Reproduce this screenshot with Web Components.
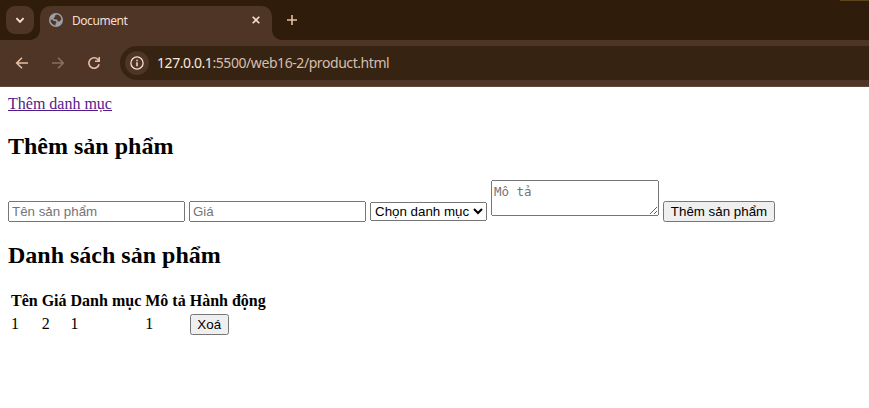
<!DOCTYPE html>
<html lang="vi">
<head>
<meta charset="utf-8">
<title>Document</title>
<style>
body{margin:0;background:#fff;font:16px "Liberation Serif",serif;color:#000;overflow:hidden}
</style>
</head>
<body>
<browser-frame>
  <tab-strip slot="tabs">Document</tab-strip>
  <nav-toolbar slot="toolbar"><span slot="host">127.0.0.1</span>:5500/web16-2/product.html</nav-toolbar>
  <product-page></product-page>
</browser-frame>
<script>
const define = (name, html) => customElements.define(name, class extends HTMLElement {
  constructor() {
    super();
    const t = document.createElement('template');
    t.innerHTML = html;
    this.attachShadow({mode: 'open'}).append(t.content.cloneNode(true));
  }
});

define('browser-frame', `
<style>:host{display:flex;flex-direction:column;height:408px;overflow:hidden}main{flex:1}</style>
<slot name="tabs"></slot><slot name="toolbar"></slot><main><slot></slot></main>`);

define('tab-strip', `
<style>
:host{display:flex;box-sizing:border-box;height:40px;padding:6px 0 0 6px;background:#2f1c0a;position:relative;color:#f6dfd0;font:12px "Noto Sans",sans-serif}
:host::after{content:"";position:absolute;right:0;top:0;width:29px;height:1px;background:#5e431c}
svg{display:block;flex:none}
.search{width:28px;height:28px;border-radius:9px;background:#4e3525;margin-right:6px}
.tab{display:flex;align-items:center;box-sizing:border-box;width:232px;height:34px;padding:0 12px 6px 9px;border-radius:10px 10px 0 0;background:#4e3525;position:relative}
.tab::before,.tab::after{content:"";position:absolute;bottom:0;width:10px;height:10px}
.tab::before{left:-10px;background:radial-gradient(circle at 0 0,transparent 9.6px,#4e3525 10.2px)}
.tab::after{right:-10px;background:radial-gradient(circle at 100% 0,transparent 9.6px,#4e3525 10.2px)}
.title{flex:1;margin:2px 0 0 9px;letter-spacing:-.45px;line-height:16px}
.plus{margin:7px 0 0 13px}
</style>
<svg class="search" viewBox="0 0 28 28"><path d="M10.4 12.2 14 15.8l3.6-3.6" fill="none" stroke="#f6dfd0" stroke-width="1.9"/></svg>
<div class="tab">
  <svg width="14" height="14" viewBox="0 0 14 14"><circle cx="7" cy="7" r="7" fill="#9aa0a6"/><path d="M8.3 1.5 6.2 2.3 6 4 4.5 5.1 5 6.3l3 .2.7 1.8 1.8.1 1.8-2C12.4 3.9 10.700 2.100 8.300 1.500zM1.500 6.500c0 3.200 2.200 5.500 5.200 6L6.300 11l1.300-1.300L6.900 8.300 4.800 8 3.500 6.700z" fill="#4e3525"/></svg>
  <span class="title"><slot></slot></span>
  <svg width="8" height="8" viewBox="0 0 8 8"><path d="m.7.7 6.600 6.600m0-6.600L.7 7.300" stroke="#f6dfd0" stroke-width="1.600"/></svg>
</div>
<svg class="plus" width="14" height="14" viewBox="0 0 14 14"><path d="M7 2v10M2 7h10" stroke="#e6bea5" stroke-width="1.600"/></svg>`);

define('nav-toolbar', `
<style>
:host{display:flex;align-items:center;box-sizing:border-box;height:47px;background:#4e3525;border-bottom:1px solid #5d483c;font:14px "Noto Sans",sans-serif}
svg{display:block;flex:none}
.nav{display:flex;gap:20px;width:106px;padding-left:14px;flex:none}
.bar{flex:1;display:flex;align-items:center;height:34px;border-radius:17px 0 0 17px;background:#362312;color:#d5bfaf}
.info{display:grid;place-items:center;width:24px;height:24px;border-radius:50%;background:#4e3525;margin:0 8px 0 5px}
.url{line-height:20px;letter-spacing:-.43px;white-space:pre}
.url slot[name=host]{color:#fbe8dc}
</style>
<div class="nav">
<svg width="16" height="16" viewBox="0 0 16 16" fill="none" stroke="#e6bea5" stroke-width="1.600"><path d="M14 8H3M8 2.700 2.700 8 8 13.300"/></svg>
<svg width="16" height="16" viewBox="0 0 16 16" fill="none" stroke="#8c6f5d" stroke-width="1.600"><path d="M2 8h11M8 2.700 13.300 8 8 13.300"/></svg>
<svg width="16" height="16" viewBox="0 0 16 16" fill="none" stroke="#e6bea5" stroke-width="1.600"><path d="M13.100 9.200A5.200 5.200 0 1 1 11.900 4.500L13.200 5.900M13.200 2v4.300H9"/></svg>
</div>
<div class="bar"><div class="info"><svg width="14" height="14" viewBox="0 0 14 14"><circle cx="7" cy="7" r="6.100" fill="none" stroke="#f6dfd0" stroke-width="1.300"/><path d="M7 6.200v4M7 3.700v1.500" stroke="#f6dfd0" stroke-width="1.500"/></svg></div>
<div class="url"><slot name="host"></slot><slot></slot></div></div>`);

define('product-page', `
<style>
:host{display:block;padding:8px}
a{color:#551a8b;text-decoration:underline}
h2{font-size:24px;margin:19.920px 0;line-height:27px}
p{margin:0;line-height:18px}
</style>
<p><a>Thêm danh mục</a></p>
<h2>Thêm sản phẩm</h2>
<product-form></product-form>
<h2>Danh sách sản phẩm</h2>
<product-table></product-table>`);

define('product-form', `
<style>
:host{display:flex;align-items:flex-end;gap:4px;height:42px}
input,select,button{font:13.333px "Liberation Sans",Arial,sans-serif;box-sizing:border-box;margin:0}
input{width:177px;height:21px;padding:1px 2px}
select{width:117px;height:19px;margin-bottom:1px}
textarea{font:13.333px "Liberation Mono","DejaVu Sans Mono",monospace;box-sizing:border-box;width:168px;height:36px;margin:0 0 6px;padding:3px 2px 1px}
button{width:112px;height:21px;padding:1px 0;white-space:nowrap}
input::placeholder,textarea::placeholder{color:#757575}
textarea::placeholder{font:12.500px "DejaVu Sans Mono",monospace}
</style>
<input placeholder="Tên sản phẩm"><input placeholder="Giá"><select><option>Chọn danh mục</option></select><textarea placeholder="Mô tả"></textarea><button>Thêm sản phẩm</button>`);

define('product-table', `
<style>
:host{display:block}
td,th{line-height:18px}
button{font:13.333px "Liberation Sans",Arial,sans-serif;box-sizing:border-box;width:39px;height:21px;padding:1px 0;margin:0}
</style>
<table><tr><th>Tên</th><th>Giá</th><th>Danh mục</th><th>Mô tả</th><th>Hành động</th></tr>
<tr><td>1</td><td>2</td><td>1</td><td>1</td><td><button>Xoá</button></td></tr></table>`);
</script>
</body>
</html>
